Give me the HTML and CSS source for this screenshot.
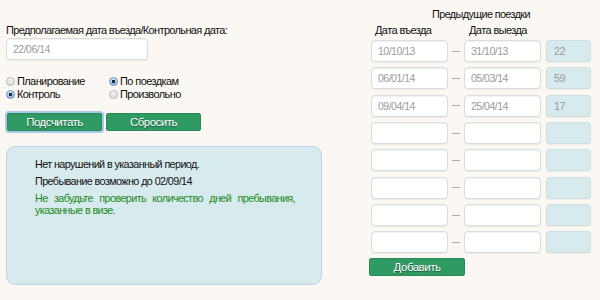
FILE: index.html
```html
<!DOCTYPE html>
<html lang="ru">
<head>
    <meta charset="UTF-8">
    <title>Калькулятор дней пребывания</title>
    <link rel="stylesheet" href="styles.css">
</head>
<body>
    <div class="page">
        <div class="left">
            <label class="main-label" for="checkDate">Предполагаемая дата въезда/Контрольная дата:</label>
            <input type="text" id="checkDate" class="field date-main" value="22/06/14">

            <div class="options">
                <label class="opt"><input type="radio" name="mode"> Планирование</label>
                <label class="opt"><input type="radio" name="calc" checked> По поездкам</label>
                <label class="opt"><input type="radio" name="mode" checked> Контроль</label>
                <label class="opt"><input type="radio" name="calc"> Произвольно</label>
            </div>

            <div class="actions">
                <button class="btn btn-focus">Подсчитать</button>
                <button class="btn">Сбросить</button>
            </div>

            <div class="result">
                <p>Нет нарушений в указанный период.</p>
                <p>Пребывание возможно до 02/09/14</p>
                <p class="note">Не забудьте проверить количество дней пребывания, указанные в визе.</p>
            </div>
        </div>

        <div class="right">
            <div class="trips-title">Предыдущие поездки</div>
            <div class="trips-head">
                <span class="head-in">Дата въезда</span>
                <span class="head-out">Дата выезда</span>
            </div>
            <div class="trips">
                <div class="trip">
                    <input type="text" class="field" value="10/10/13"><span class="dash"></span>
                    <input type="text" class="field" value="31/10/13"><span class="days">22</span>
                </div>
                <div class="trip">
                    <input type="text" class="field" value="06/01/14"><span class="dash"></span>
                    <input type="text" class="field" value="05/03/14"><span class="days">59</span>
                </div>
                <div class="trip">
                    <input type="text" class="field" value="09/04/14"><span class="dash"></span>
                    <input type="text" class="field" value="25/04/14"><span class="days">17</span>
                </div>
                <div class="trip">
                    <input type="text" class="field"><span class="dash"></span>
                    <input type="text" class="field"><span class="days"></span>
                </div>
                <div class="trip">
                    <input type="text" class="field"><span class="dash"></span>
                    <input type="text" class="field"><span class="days"></span>
                </div>
                <div class="trip">
                    <input type="text" class="field"><span class="dash"></span>
                    <input type="text" class="field"><span class="days"></span>
                </div>
                <div class="trip">
                    <input type="text" class="field"><span class="dash"></span>
                    <input type="text" class="field"><span class="days"></span>
                </div>
                <div class="trip">
                    <input type="text" class="field"><span class="dash"></span>
                    <input type="text" class="field"><span class="days"></span>
                </div>
            </div>
            <button class="btn btn-add">Добавить</button>
        </div>
    </div>
</body>
</html>
```

FILE: styles.css
```css
:root {
    --bg: #fbf8f4;
    --green: #2f9a63;
    --pale: #d7eaed;
    --text: #111;
    --muted: #9a9a9a;
}

* {
    margin: 0;
    padding: 0;
    box-sizing: border-box;
    font-family: 'Liberation Sans', Arial, sans-serif;
}

body {
    background-color: var(--bg);
    color: var(--text);
    width: 600px;
    height: 300px;
    overflow: hidden;
    font-size: 10.8px;
    letter-spacing: -0.6px;
}

.page {
    display: flex;
}

.left {
    width: 369px;
    padding: 24px 0 0 6px;
}

.main-label {
    display: block;
    line-height: 12px;
    font-size: 11px;
    letter-spacing: -0.65px;
}

.field {
    display: block;
    height: 22px;
    background: white;
    border: 1px solid #dcdcdc;
    border-radius: 4px;
    box-shadow: inset 0 1px 1px rgba(0, 0, 0, 0.06), 0 1px 1px rgba(0, 0, 0, 0.06);
    font-size: 10.5px;
    letter-spacing: -0.5px;
    color: var(--muted);
    padding: 0 6px;
    outline: none;
}

.date-main {
    width: 142px;
    margin-top: 2px;
}

.options {
    display: grid;
    grid-template-columns: 103px auto;
    width: 200px;
    margin-top: 15px;
    row-gap: 1px;
}

.opt {
    display: flex;
    align-items: center;
    line-height: 12px;
    font-size: 11px;
}

.opt input {
    appearance: none;
    width: 9px;
    height: 9px;
    margin-right: 2px;
    border-radius: 50%;
    border: 1px solid #b5b5b5;
    background: linear-gradient(#f4f4f4, #dedede);
}

.opt input:checked {
    border-color: #6d8fb8;
    background: radial-gradient(circle, #1c2a3a 0 1.6px, transparent 2px),
                linear-gradient(#cfe3f8, #8fb7e6);
}

.actions {
    display: flex;
    gap: 4px;
    margin-top: 13px;
    padding-left: 1px;
}

.btn {
    width: 95px;
    height: 18px;
    background-color: var(--green);
    border: 1px solid #2a8a58;
    border-radius: 2px;
    color: white;
    font-size: 11.5px;
    letter-spacing: -0.5px;
    text-shadow: 0 1px 1px rgba(0, 0, 0, 0.45);
    cursor: pointer;
}

.btn-focus {
    box-shadow: 0 0 0 2px #a9c9ea;
}

.result {
    width: 316px;
    height: 139px;
    margin-top: 15px;
    background-color: var(--pale);
    border: 1px solid #bcd3ea;
    border-radius: 9px;
    padding: 11px 26px 0 28px;
    line-height: 12px;
}

.result p {
    margin-bottom: 5px;
}

.result .note {
    color: #218a21;
    text-align: justify;
}

.right {
    width: 222px;
    padding-top: 8px;
}

.trips-title {
    text-align: center;
    line-height: 12px;
    padding-left: 2px;
}

.trips-head {
    display: flex;
    font-size: 11px;
    line-height: 12px;
    margin-top: 4px;
}

.head-in {
    padding-left: 6px;
    width: 100px;
}

.trips {
    display: flex;
    flex-direction: column;
    gap: 5.35px;
    margin-top: 4px;
    padding-left: 2px;
}

.trip {
    display: flex;
    align-items: center;
}

.trip .field {
    width: 77px;
}

.dash {
    width: 16px;
    display: flex;
    justify-content: center;
}

.dash::before {
    content: "";
    width: 8px;
    height: 1px;
    background: #aaa;
}

.days {
    margin-left: 5px;
    width: 45px;
    height: 22px;
    background: var(--pale);
    border: 1px solid #cfe0e3;
    border-radius: 3px;
    box-shadow: 0 1px 1px rgba(0, 0, 0, 0.05);
    color: var(--muted);
    line-height: 20px;
    padding-left: 7px;
}

.btn-add {
    display: block;
    margin-top: 5px;
    height: 18px;
    width: 96px;
}
```
